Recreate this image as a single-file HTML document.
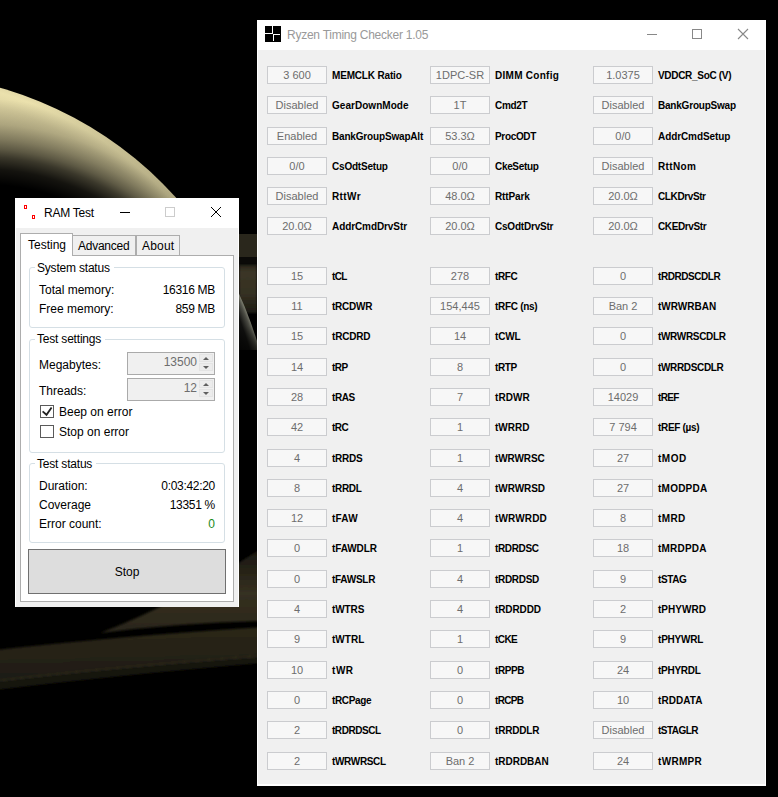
<!DOCTYPE html>
<html><head><meta charset="utf-8">
<style>
*{margin:0;padding:0;box-sizing:border-box}
html,body{width:778px;height:797px;overflow:hidden;background:#000}
body{position:relative;font-family:"Liberation Sans",sans-serif}
.abs{position:absolute}
#bg{position:absolute;left:0;top:0}
.win{position:absolute;background:#fff}
.body{position:absolute;background:#f0f0f0}
.tb{position:absolute;width:60px;height:18px;border:1px solid #cbcccf;background:#f7f7f7;color:#6d6d6d;font-size:11px;line-height:16px;text-align:center;white-space:nowrap}
.lb{position:absolute;height:18px;font-size:10px;font-weight:bold;line-height:18px;color:#000;white-space:nowrap;}
.t12{position:absolute;font-size:12px;line-height:16px;white-space:nowrap;color:#000}
.gb{position:absolute;border:1px solid #d5dfe5;border-radius:3px}
.leg{position:absolute;background:#fff;padding:0 4px 0 2px;font-size:12px;line-height:16px;white-space:nowrap;letter-spacing:-0.2px}
.num{position:absolute;border:1px solid #aaaaaa;background:#f0f0f0;color:#6d6d6d;font-size:12px;line-height:19px;text-align:right;padding-right:17px}
.spu,.spd{position:absolute;left:71px;width:14px;height:8px;background:#ececec;border:1px solid #e4e4e4}
.spu{top:1px} .spd{top:10px}
.spu:after,.spd:after{content:"";position:absolute;left:3px;width:0;height:0;border-left:3px solid transparent;border-right:3px solid transparent}
.spu:after{top:2px;border-bottom:3px solid #606060}
.spd:after{top:2px;border-top:3px solid #606060}
.cb{position:absolute;width:14px;height:13px;border:1px solid #5a5a5a;background:#fff}
</style></head><body>
<svg id="bg" width="778" height="797" viewBox="0 0 778 797">
  <defs>
    <radialGradient id="pg" cx="-104" cy="450" r="377" gradientUnits="userSpaceOnUse">
      <stop offset="0.70" stop-color="#bdb388"/>
      <stop offset="0.87" stop-color="#d2c899"/>
      <stop offset="0.95" stop-color="#ddd3a2"/>
      <stop offset="0.987" stop-color="#ebe1ad"/>
      <stop offset="1" stop-color="#e2d8a6"/>
    </radialGradient>
    <radialGradient id="tb" cx="-22" cy="431" r="332.4" gradientUnits="userSpaceOnUse">
      <stop offset="0.7434" stop-color="#000" stop-opacity="1"/>
      <stop offset="0.7894" stop-color="#000" stop-opacity="0.9"/>
      <stop offset="0.826" stop-color="#000" stop-opacity="0.72"/>
      <stop offset="0.8496" stop-color="#000" stop-opacity="0.56"/>
      <stop offset="0.8797" stop-color="#000" stop-opacity="0.4"/>
      <stop offset="0.9248" stop-color="#000" stop-opacity="0.2"/>
      <stop offset="1" stop-color="#000" stop-opacity="0"/>
    </radialGradient>
    <radialGradient id="sg" cx="-104" cy="450" r="377" gradientUnits="userSpaceOnUse">
      <stop offset="0.90" stop-color="#000" stop-opacity="1"/>
      <stop offset="0.975" stop-color="#000" stop-opacity="0.85"/>
      <stop offset="0.993" stop-color="#000" stop-opacity="0.35"/>
      <stop offset="1" stop-color="#000" stop-opacity="0"/>
    </radialGradient>
    <linearGradient id="ra" x1="0" y1="552" x2="0" y2="634" gradientUnits="userSpaceOnUse">
      <stop offset="0" stop-color="#1a1810"/>
      <stop offset="0.5" stop-color="#353021"/>
      <stop offset="1" stop-color="#2a2619"/>
    </linearGradient>
    <linearGradient id="rb" x1="0" y1="0" x2="0.12" y2="1">
      <stop offset="0" stop-color="#2b2719"/>
      <stop offset="0.5" stop-color="#272318"/>
      <stop offset="1" stop-color="#1d1a12"/>
    </linearGradient>
    <linearGradient id="b2" x1="0" y1="0" x2="0" y2="1">
      <stop offset="0" stop-color="#2a261b"/>
      <stop offset="0.15" stop-color="#3b3626"/>
      <stop offset="0.6" stop-color="#353022"/>
      <stop offset="1" stop-color="#1c1a13"/>
    </linearGradient>
    <clipPath id="ct"><rect x="0" y="0" width="239" height="560"/></clipPath>
    <clipPath id="cs"><rect x="200" y="200" width="100" height="150"/></clipPath>
    <linearGradient id="rimfade" x1="0" y1="290" x2="0" y2="350" gradientUnits="userSpaceOnUse">
      <stop offset="0" stop-color="#8a8b7c"/>
      <stop offset="0.6" stop-color="#6f7064"/>
      <stop offset="1" stop-color="#303028"/>
    </linearGradient>
    <filter id="bl" x="-10%" y="-50%" width="120%" height="200%"><feGaussianBlur stdDeviation="1.2"/></filter>
  </defs>
  <rect x="239" y="234" width="18" height="23" fill="#2a271c"/>
  <rect x="239" y="257" width="18" height="9" fill="#0b0a08"/>
  <rect x="239" y="265" width="18" height="48" fill="url(#b2)" filter="url(#bl)"/>
  <g clip-path="url(#ct)"><circle cx="-104" cy="450" r="377" fill="url(#pg)"/><circle cx="-22" cy="431" r="332.4" fill="url(#tb)"/></g>
  <circle cx="-104" cy="450" r="377" fill="url(#rimfade)" clip-path="url(#cs)"/>
  <circle cx="-104" cy="450" r="377" fill="url(#sg)" clip-path="url(#cs)"/>
  <g filter="url(#bl)">
  <path d="M100 633 Q175 605 262 548 L262 621 Q180 623 100 633 Z" fill="url(#ra)"/>
  <path d="M-5 650 Q120 636 262 627 L262 655 Q120 665 -5 680 Z" fill="url(#rb)"/>
  <path d="M-5 680 Q120 665 262 655 L262 657 Q120 667 -5 682 Z" fill="#2e2a1f"/>
  <path d="M-5 682 Q120 667 262 657 L262 663 Q120 675 -5 690 Z" fill="#14120d"/>
  </g>
</svg>

<!-- RAM Test window -->
<div class="win" style="left:15px;top:198px;width:224px;height:409px">
  <div class="body" style="left:1px;top:30px;width:222px;height:379px"></div>
  <svg class="abs" style="left:0;top:0" width="225" height="30">
    <path d="M9 7h3v4h-3z M10 8v2h1v-2z M17 17h3v4h-3z M18 18v2h1v-2z" fill="#f00" fill-rule="evenodd"/>
    <line x1="105" y1="14.5" x2="115" y2="14.5" stroke="#000" stroke-width="1"/>
    <rect x="150.5" y="9.5" width="9" height="9" fill="none" stroke="#ccc" stroke-width="1"/>
    <path d="M196 9 L206 19 M206 9 L196 19" stroke="#000" stroke-width="1"/>
  </svg>
  <div class="t12" style="left:29px;top:7px;letter-spacing:-0.25px">RAM Test</div>
</div>
<!-- tab panel -->
<div class="abs" style="left:20px;top:255px;width:214px;height:347px;border:1px solid #adadad;background:#fff"></div>
<div class="abs" style="left:72px;top:235px;width:64px;height:21px;border:1px solid #adadad;background:#f0f0f0"></div>
<div class="abs" style="left:136px;top:235px;width:44px;height:21px;border:1px solid #adadad;background:#f0f0f0"></div>
<div class="abs" style="left:20px;top:233px;width:53px;height:23px;border:1px solid #adadad;border-bottom:none;background:#fff"></div>
<div class="t12" style="left:28px;top:237px">Testing</div>
<div class="t12" style="left:78px;top:238px;letter-spacing:-0.25px">Advanced</div>
<div class="t12" style="left:142px;top:238px;letter-spacing:0.2px">About</div>

<div class="gb" style="left:29px;top:267px;width:196px;height:61px"></div>
<div class="leg" style="left:35px;top:260px">System status</div>
<div class="t12" style="left:39px;top:282px">Total memory:</div>
<div class="t12" style="left:39px;top:301px">Free memory:</div>
<div class="t12" style="left:215px;top:282px;transform:translateX(-100%);letter-spacing:-0.3px">16316 MB</div>
<div class="t12" style="left:215px;top:301px;transform:translateX(-100%);letter-spacing:-0.3px">859 MB</div>

<div class="gb" style="left:29px;top:339px;width:196px;height:114px"></div>
<div class="leg" style="left:35px;top:331px">Test settings</div>
<div class="t12" style="left:39px;top:357px">Megabytes:</div>
<div class="t12" style="left:39px;top:383px">Threads:</div>
<div class="num" style="left:127px;top:352px;width:88px;height:23px">13500<div class="spu"></div><div class="spd"></div></div>
<div class="num" style="left:127px;top:378px;width:88px;height:23px">12<div class="spu"></div><div class="spd"></div></div>
<div class="cb" style="left:40px;top:405px"><svg class="abs" style="left:-1px;top:-1px" width="13" height="13"><path d="M2.6 6.4 L6.5 9.8 L11.6 2.4" stroke="#222" stroke-width="1.8" fill="none"/></svg></div>
<div class="cb" style="left:40px;top:425px"></div>
<div class="t12" style="left:59px;top:404px">Beep on error</div>
<div class="t12" style="left:59px;top:424px">Stop on error</div>

<div class="gb" style="left:29px;top:463px;width:196px;height:80px"></div>
<div class="leg" style="left:35px;top:456px">Test status</div>
<div class="t12" style="left:39px;top:478px">Duration:</div>
<div class="t12" style="left:39px;top:497px">Coverage</div>
<div class="t12" style="left:39px;top:516px">Error count:</div>
<div class="t12" style="left:215px;top:478px;transform:translateX(-100%);letter-spacing:-0.3px">0:03:42:20</div>
<div class="t12" style="left:215px;top:497px;transform:translateX(-100%);letter-spacing:-0.3px">13351 %</div>
<div class="t12" style="left:215px;top:516px;transform:translateX(-100%);color:#1a8a1a">0</div>

<div class="abs" style="left:28px;top:549px;width:198px;height:45px;border:1px solid #707070;background:#dddddd"></div>
<div class="t12" style="left:127px;top:564px;transform:translateX(-50%)">Stop</div>

<!-- RTC window -->
<div class="win" style="left:257px;top:20px;width:509px;height:766px">
  <div class="body" style="left:1px;top:30px;width:507px;height:734px"></div>
  <svg class="abs" style="left:0;top:0" width="509" height="30">
    <rect x="8" y="6" width="16" height="16" fill="#000"/>
    <path d="M15 6h1v8h-8v-1h7z M16 14h7v1h-6v6h-1z" fill="#fff"/>
    <line x1="390" y1="14.5" x2="400" y2="14.5" stroke="#888" stroke-width="1"/>
    <rect x="435.5" y="9.5" width="9" height="9" fill="none" stroke="#888" stroke-width="1"/>
    <path d="M481 9 L491 19 M491 9 L481 19" stroke="#888" stroke-width="1.1"/>
  </svg>
  <div class="t12" style="left:30px;top:7px;color:#999;letter-spacing:-0.25px">Ryzen Timing Checker 1.05</div>
  <div class="tb" style="left:10px;top:46px">3 600</div><div class="lb" style="left:75px;top:47px;letter-spacing:-0.172px">MEMCLK Ratio</div>
<div class="tb" style="left:173px;top:46px">1DPC-SR</div><div class="lb" style="left:238px;top:47px;letter-spacing:0.280px">DIMM Config</div>
<div class="tb" style="left:336px;top:46px">1.0375</div><div class="lb" style="left:401px;top:47px;letter-spacing:-0.309px">VDDCR_SoC (V)</div>
<div class="tb" style="left:10px;top:76px">Disabled</div><div class="lb" style="left:75px;top:77px;letter-spacing:0.037px">GearDownMode</div>
<div class="tb" style="left:173px;top:76px">1T</div><div class="lb" style="left:238px;top:77px;letter-spacing:-0.325px">Cmd2T</div>
<div class="tb" style="left:336px;top:76px">Disabled</div><div class="lb" style="left:401px;top:77px;letter-spacing:-0.208px">BankGroupSwap</div>
<div class="tb" style="left:10px;top:107px">Enabled</div><div class="lb" style="left:75px;top:108px;letter-spacing:-0.173px">BankGroupSwapAlt</div>
<div class="tb" style="left:173px;top:107px">53.3Ω</div><div class="lb" style="left:238px;top:108px;letter-spacing:-0.333px">ProcODT</div>
<div class="tb" style="left:336px;top:107px">0/0</div><div class="lb" style="left:401px;top:108px;letter-spacing:-0.091px">AddrCmdSetup</div>
<div class="tb" style="left:10px;top:137px">0/0</div><div class="lb" style="left:75px;top:138px;letter-spacing:-0.201px">CsOdtSetup</div>
<div class="tb" style="left:173px;top:137px">0/0</div><div class="lb" style="left:238px;top:138px;letter-spacing:-0.328px">CkeSetup</div>
<div class="tb" style="left:336px;top:137px">Disabled</div><div class="lb" style="left:401px;top:138px;letter-spacing:0.380px">RttNom</div>
<div class="tb" style="left:10px;top:167px">Disabled</div><div class="lb" style="left:75px;top:168px;letter-spacing:0.400px">RttWr</div>
<div class="tb" style="left:173px;top:167px">48.0Ω</div><div class="lb" style="left:238px;top:168px;letter-spacing:-0.116px">RttPark</div>
<div class="tb" style="left:336px;top:167px">20.0Ω</div><div class="lb" style="left:401px;top:168px;letter-spacing:-0.389px">CLKDrvStr</div>
<div class="tb" style="left:10px;top:197px">20.0Ω</div><div class="lb" style="left:75px;top:198px;letter-spacing:-0.091px">AddrCmdDrvStr</div>
<div class="tb" style="left:173px;top:197px">20.0Ω</div><div class="lb" style="left:238px;top:198px;letter-spacing:-0.210px">CsOdtDrvStr</div>
<div class="tb" style="left:336px;top:197px">20.0Ω</div><div class="lb" style="left:401px;top:198px;letter-spacing:-0.389px">CKEDrvStr</div>
<div class="tb" style="left:10px;top:247px">15</div><div class="lb" style="left:75px;top:248px;letter-spacing:-0.700px">tCL</div>
<div class="tb" style="left:173px;top:247px">278</div><div class="lb" style="left:238px;top:248px;letter-spacing:-0.400px">tRFC</div>
<div class="tb" style="left:336px;top:247px">0</div><div class="lb" style="left:401px;top:248px;letter-spacing:-0.433px">tRDRDSCDLR</div>
<div class="tb" style="left:10px;top:277px">11</div><div class="lb" style="left:75px;top:278px;letter-spacing:-0.240px">tRCDWR</div>
<div class="tb" style="left:173px;top:277px">154,445</div><div class="lb" style="left:238px;top:278px;letter-spacing:-0.300px">tRFC (ns)</div>
<div class="tb" style="left:336px;top:277px">Ban 2</div><div class="lb" style="left:401px;top:278px">tWRWRBAN</div>
<div class="tb" style="left:10px;top:307px">15</div><div class="lb" style="left:75px;top:308px;letter-spacing:-0.180px">tRCDRD</div>
<div class="tb" style="left:173px;top:307px">14</div><div class="lb" style="left:238px;top:308px;letter-spacing:-0.133px">tCWL</div>
<div class="tb" style="left:336px;top:307px">0</div><div class="lb" style="left:401px;top:308px;letter-spacing:-0.333px">tWRWRSCDLR</div>
<div class="tb" style="left:10px;top:338px">14</div><div class="lb" style="left:75px;top:339px;letter-spacing:-0.550px">tRP</div>
<div class="tb" style="left:173px;top:338px">8</div><div class="lb" style="left:238px;top:339px;letter-spacing:-0.400px">tRTP</div>
<div class="tb" style="left:336px;top:338px">0</div><div class="lb" style="left:401px;top:339px;letter-spacing:-0.345px">tWRRDSCDLR</div>
<div class="tb" style="left:10px;top:368px">28</div><div class="lb" style="left:75px;top:369px;letter-spacing:-0.433px">tRAS</div>
<div class="tb" style="left:173px;top:368px">7</div><div class="lb" style="left:238px;top:369px;letter-spacing:0.050px">tRDWR</div>
<div class="tb" style="left:336px;top:368px">14029</div><div class="lb" style="left:401px;top:369px;letter-spacing:-0.634px">tREF</div>
<div class="tb" style="left:10px;top:398px">42</div><div class="lb" style="left:75px;top:399px;letter-spacing:-0.550px">tRC</div>
<div class="tb" style="left:173px;top:398px">1</div><div class="lb" style="left:238px;top:399px">tWRRD</div>
<div class="tb" style="left:336px;top:398px">7 794</div><div class="lb" style="left:401px;top:399px;letter-spacing:-0.312px">tREF (µs)</div>
<div class="tb" style="left:10px;top:429px">4</div><div class="lb" style="left:75px;top:430px;letter-spacing:-0.250px">tRRDS</div>
<div class="tb" style="left:173px;top:429px">1</div><div class="lb" style="left:238px;top:430px;letter-spacing:-0.100px">tWRWRSC</div>
<div class="tb" style="left:336px;top:429px">27</div><div class="lb" style="left:401px;top:430px;letter-spacing:0.533px">tMOD</div>
<div class="tb" style="left:10px;top:459px">8</div><div class="lb" style="left:75px;top:460px;letter-spacing:-0.300px">tRRDL</div>
<div class="tb" style="left:173px;top:459px">4</div><div class="lb" style="left:238px;top:460px;letter-spacing:-0.051px">tWRWRSD</div>
<div class="tb" style="left:336px;top:459px">27</div><div class="lb" style="left:401px;top:460px;letter-spacing:0.234px">tMODPDA</div>
<div class="tb" style="left:10px;top:489px">12</div><div class="lb" style="left:75px;top:490px;letter-spacing:0.201px">tFAW</div>
<div class="tb" style="left:173px;top:489px">4</div><div class="lb" style="left:238px;top:490px;letter-spacing:0.133px">tWRWRDD</div>
<div class="tb" style="left:336px;top:489px">8</div><div class="lb" style="left:401px;top:490px;letter-spacing:0.400px">tMRD</div>
<div class="tb" style="left:10px;top:519px">0</div><div class="lb" style="left:75px;top:520px;letter-spacing:-0.099px">tFAWDLR</div>
<div class="tb" style="left:173px;top:519px">1</div><div class="lb" style="left:238px;top:520px;letter-spacing:-0.350px">tRDRDSC</div>
<div class="tb" style="left:336px;top:519px">18</div><div class="lb" style="left:401px;top:520px;letter-spacing:0.217px">tMRDPDA</div>
<div class="tb" style="left:10px;top:550px">0</div><div class="lb" style="left:75px;top:551px;letter-spacing:-0.267px">tFAWSLR</div>
<div class="tb" style="left:173px;top:550px">4</div><div class="lb" style="left:238px;top:551px;letter-spacing:-0.300px">tRDRDSD</div>
<div class="tb" style="left:336px;top:550px">9</div><div class="lb" style="left:401px;top:551px;letter-spacing:-0.375px">tSTAG</div>
<div class="tb" style="left:10px;top:580px">4</div><div class="lb" style="left:75px;top:581px;letter-spacing:-0.100px">tWTRS</div>
<div class="tb" style="left:173px;top:580px">4</div><div class="lb" style="left:238px;top:581px;letter-spacing:-0.116px">tRDRDDD</div>
<div class="tb" style="left:336px;top:580px">2</div><div class="lb" style="left:401px;top:581px;letter-spacing:0.017px">tPHYWRD</div>
<div class="tb" style="left:10px;top:610px">9</div><div class="lb" style="left:75px;top:611px;letter-spacing:0.025px">tWTRL</div>
<div class="tb" style="left:173px;top:610px">1</div><div class="lb" style="left:238px;top:611px;letter-spacing:-0.567px">tCKE</div>
<div class="tb" style="left:336px;top:610px">9</div><div class="lb" style="left:401px;top:611px;letter-spacing:-0.201px">tPHYWRL</div>
<div class="tb" style="left:10px;top:641px">10</div><div class="lb" style="left:75px;top:642px;letter-spacing:0.550px">tWR</div>
<div class="tb" style="left:173px;top:641px">0</div><div class="lb" style="left:238px;top:642px;letter-spacing:-0.425px">tRPPB</div>
<div class="tb" style="left:336px;top:641px">24</div><div class="lb" style="left:401px;top:642px;letter-spacing:-0.266px">tPHYRDL</div>
<div class="tb" style="left:10px;top:671px">0</div><div class="lb" style="left:75px;top:672px;letter-spacing:-0.367px">tRCPage</div>
<div class="tb" style="left:173px;top:671px">0</div><div class="lb" style="left:238px;top:672px;letter-spacing:-0.675px">tRCPB</div>
<div class="tb" style="left:336px;top:671px">10</div><div class="lb" style="left:401px;top:672px;letter-spacing:0.067px">tRDDATA</div>
<div class="tb" style="left:10px;top:701px">2</div><div class="lb" style="left:75px;top:702px;letter-spacing:-0.457px">tRDRDSCL</div>
<div class="tb" style="left:173px;top:701px">0</div><div class="lb" style="left:238px;top:702px;letter-spacing:-0.200px">tRRDDLR</div>
<div class="tb" style="left:336px;top:701px">Disabled</div><div class="lb" style="left:401px;top:702px;letter-spacing:-0.534px">tSTAGLR</div>
<div class="tb" style="left:10px;top:732px">2</div><div class="lb" style="left:75px;top:733px;letter-spacing:-0.342px">tWRWRSCL</div>
<div class="tb" style="left:173px;top:732px">Ban 2</div><div class="lb" style="left:238px;top:733px;letter-spacing:-0.028px">tRDRDBAN</div>
<div class="tb" style="left:336px;top:732px">24</div><div class="lb" style="left:401px;top:733px;letter-spacing:0.320px">tWRMPR</div>
</div>
</body></html>
